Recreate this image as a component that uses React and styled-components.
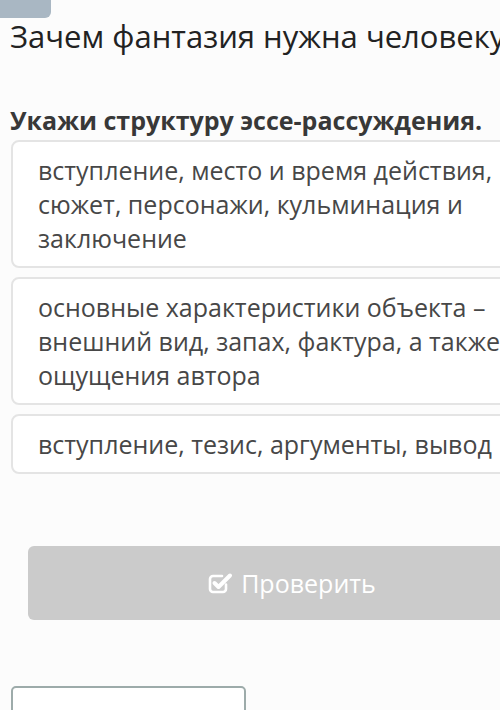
import styled, { createGlobalStyle } from "styled-components";

const GlobalStyle = createGlobalStyle`
  html, body {
    margin: 0;
    padding: 0;
    background: #fcfcfc;
    overflow: hidden;
  }
  body {
    font-family: "Open Sans", "Noto Sans", sans-serif;
  }
`

const Page = styled.div`
  width: 580px;
  display: flex;
  flex-direction: column;
  align-items: flex-start;
`
const TopTab = styled.div`
  width: 51px;
  height: 18px;
  background-color: #a9b7c3;
  border-radius: 0 0 6px 0;
`
const Title = styled.h1`
  margin: 1px 0 0 10px;
  font-size: 31px;
  font-weight: 400;
  line-height: 34px;
  color: #222;
  white-space: nowrap;
`
const Question = styled.p`
  margin: 52px 0 0 10px;
  font-size: 25px;
  font-weight: 700;
  line-height: 30px;
  color: #383838;
  white-space: nowrap;
`
const Options = styled.div`
  margin: 5px 0 0 11px;
  width: 560px;
  display: flex;
  flex-direction: column;
  gap: 9px;
`
const Option = styled.div`
  box-sizing: border-box;
  width: 100%;
  padding: 11px 40px 11px 25px;
  border: 2px solid #e4e4e4;
  border-radius: 8px;
  background: #fff;
  font-size: 25px;
  line-height: 34px;
  color: #474747;
`
const CheckButton = styled.button`
  flex-shrink: 0;
  margin: 72px 0 0 28px;
  width: 526px;
  height: 74px;
  border: none;
  border-radius: 6px;
  background-color: #cbcbcb;
  color: #fff;
  font-family: inherit;
  font-size: 25px;
  display: flex;
  align-items: center;
  justify-content: center;
  gap: 7px;
`
const BottomBox = styled.div`
  flex-shrink: 0;
  margin: 66px 0 0 11px;
  width: 235px;
  height: 40px;
  box-sizing: border-box;
  border: 2px solid #9dabaa;
  border-radius: 5px;
  background: #fff;
`

const CheckSquare = () => (
  <svg width="28" height="28" viewBox="0 0 28 28" fill="none">
    <path
      d="M20 15.5V20a3 3 0 0 1-3 3H7a3 3 0 0 1-3-3V10a3 3 0 0 1 3-3h9"
      stroke="#fff"
      strokeWidth="2.6"
      strokeLinecap="round"
    />
    <path d="M8.5 14l4 4L24 6.5" stroke="#fff" strokeWidth="4" strokeLinecap="round" strokeLinejoin="round" />
  </svg>
);

const options = [
  "вступление, место и время действия, сюжет, персонажи, кульминация и заключение",
  "основные характеристики объекта – внешний вид, запах, фактура, а также ощущения автора",
  "вступление, тезис, аргументы, вывод",
];

export default function App() {
  return (
    <>
      <GlobalStyle />
      <Page>
        <TopTab />
        <Title>Зачем фантазия нужна человеку</Title>
        <Question>Укажи структуру эссе-рассуждения.</Question>
        <Options>
          {options.map((text, i) => (
            <Option key={i}>{text}</Option>
          ))}
        </Options>
        <CheckButton>
          <CheckSquare />
          Проверить
        </CheckButton>
        <BottomBox />
      </Page>
    </>
  );
}
